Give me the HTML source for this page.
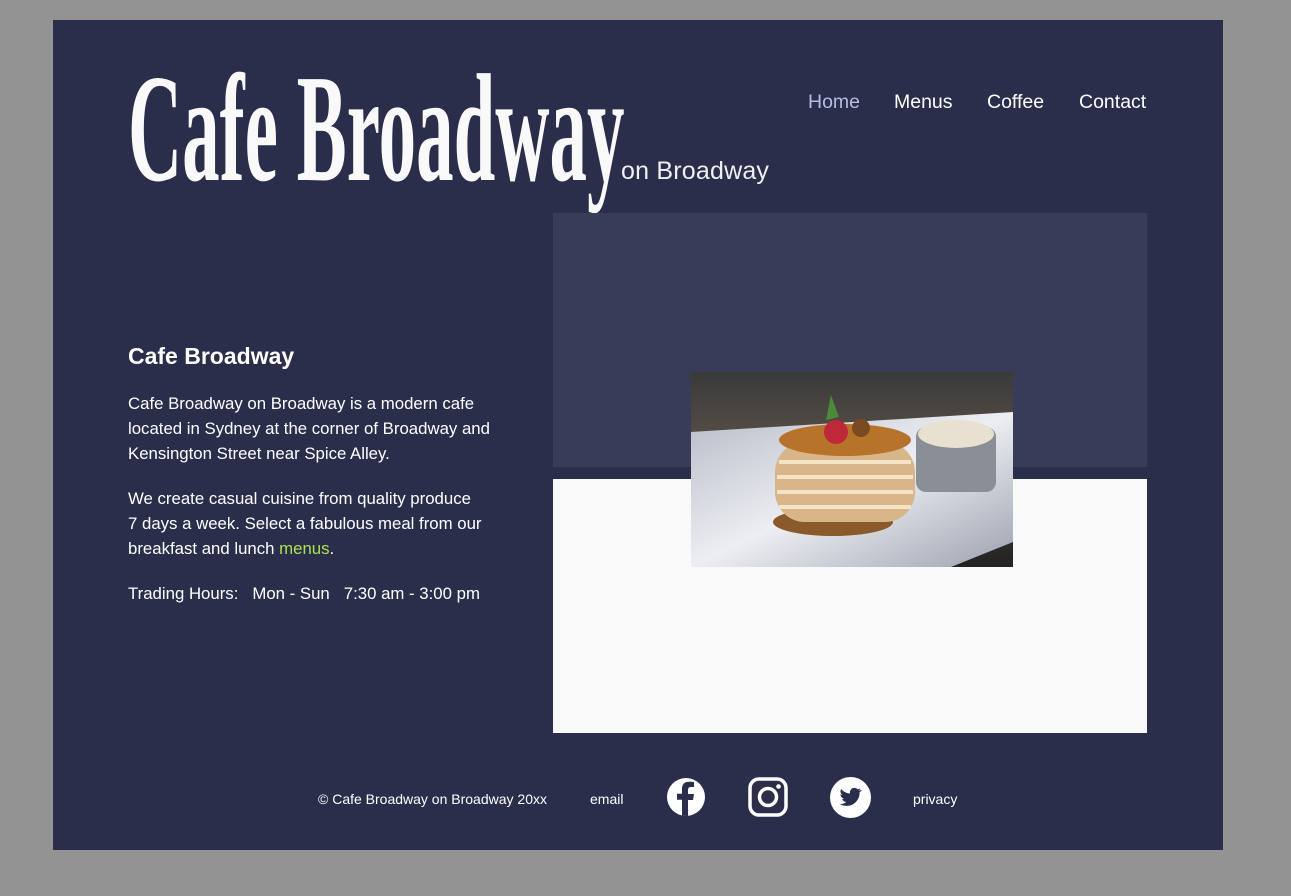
<!DOCTYPE html>
<html><head><style>
body{margin:0;width:1291px;height:896px;background:#939393;font-family:"Liberation Sans",Arial,sans-serif;position:relative;overflow:hidden}
.p{position:absolute;left:53px;top:20px;width:1170px;height:830px;background:#2b2e4b}
.a{position:absolute;color:#fff}
.title{left:128px;top:52px;font-family:"Liberation Serif",serif;font-weight:bold;font-size:154px;line-height:1;transform:scaleX(0.487);transform-origin:0 0;white-space:nowrap;color:#f9f9f9}
.sub{left:621px;top:157px;font-size:25px;color:#f0f0f0;font-weight:300;letter-spacing:0.2px}
.nav{top:91px;font-size:19.5px}
.txt{left:128px;font-size:16.8px;line-height:25px;width:420px}
.foot{top:791px;font-size:14px}
</style></head><body>
<div class="p"></div>
<div class="a title">Cafe Broadway</div>
<div class="a sub">on Broadway</div>
<div class="a nav" style="left:808px;color:#b6bce6">Home</div>
<div class="a nav" style="left:894px">Menus</div>
<div class="a nav" style="left:987px">Coffee</div>
<div class="a nav" style="left:1079px">Contact</div>
<div style="position:absolute;left:553px;top:213px;width:594px;height:254px;background:#393c58"></div>
<div style="position:absolute;left:553px;top:479px;width:594px;height:254px;background:#f9f9fa"></div>
<svg style="position:absolute;left:691px;top:372px" width="322" height="195" viewBox="0 0 322 195">
<defs><linearGradient id="bg" x1="0" y1="0" x2="0" y2="1"><stop offset="0" stop-color="#3a3a3a"/><stop offset="0.4" stop-color="#5a5048"/><stop offset="1" stop-color="#222"/></linearGradient>
<linearGradient id="pl" x1="0" y1="0" x2="1" y2="1"><stop offset="0" stop-color="#b8bcc8"/><stop offset="0.5" stop-color="#eceef2"/><stop offset="1" stop-color="#9da2b0"/></linearGradient></defs>
<rect width="322" height="195" fill="url(#bg)"/>
<polygon points="0,60 322,40 322,170 260,195 0,195" fill="url(#pl)"/>
<rect x="225" y="55" width="80" height="65" rx="10" fill="#8a8e96"/>
<ellipse cx="265" cy="62" rx="38" ry="14" fill="#e8e0d0"/>
<ellipse cx="142" cy="150" rx="60" ry="14" fill="#8a5a2a"/>
<rect x="84" y="70" width="140" height="80" rx="30" fill="#d9b68a"/>
<g fill="none" stroke="#f4e4c6" stroke-width="4"><path d="M88 90h132M86 105h136M86 120h136M88 135h132"/></g>
<ellipse cx="154" cy="68" rx="66" ry="16" fill="#b8732a"/>
<circle cx="145" cy="60" r="12" fill="#c0283a"/><circle cx="170" cy="56" r="9" fill="#7a4a20"/>
<path d="M135 48l5-25 8 22z" fill="#4a8a3a"/>
</svg>
<div class="a txt" style="top:344px;font-size:23px;font-weight:bold">Cafe Broadway</div>
<div class="a txt" style="top:391px">Cafe Broadway on Broadway is a modern cafe<br>located in Sydney at the corner of Broadway and<br>Kensington Street near Spice Alley.</div>
<div class="a txt" style="top:486px">We create casual cuisine from quality produce<br>7 days a week. Select a fabulous meal from our<br>breakfast and lunch <span style="color:#a9e34b">menus</span>.</div>
<div class="a txt" style="top:581px;white-space:pre">Trading Hours:   Mon - Sun   7:30 am - 3:00 pm</div>
<div class="a foot" style="left:318px">© Cafe Broadway on Broadway 20xx</div>
<div class="a foot" style="left:590px">email</div>
<div class="a foot" style="left:913px">privacy</div>
<svg style="position:absolute;left:667px;top:778px" width="38" height="38" viewBox="0 0 38 38"><circle cx="19" cy="19" r="19" fill="#fff"/><path d="M21 38V22h5l1-6h-6v-4c0-2 1-3 3-3h3V4c-1 0-3-.3-5-.3-5 0-7 3-7 7v5h-5v6h5v16z" fill="#2b2e4b"/></svg>
<svg style="position:absolute;left:748px;top:777px" width="40" height="40" viewBox="0 0 40 40"><rect x="2" y="2" width="36" height="36" rx="9" fill="none" stroke="#fff" stroke-width="3.5"/><circle cx="20" cy="20" r="8.5" fill="none" stroke="#fff" stroke-width="3.5"/><circle cx="30.5" cy="9.5" r="2.3" fill="#fff"/></svg>
<svg style="position:absolute;left:830px;top:777px" width="41" height="41" viewBox="0 0 41 41"><circle cx="20.5" cy="20.5" r="20.5" fill="#fff"/><path d="M31 13c-.8.4-1.6.6-2.5.7.9-.5 1.6-1.4 1.9-2.4-.8.5-1.8.9-2.7 1-1.7-1.8-4.6-1.9-6.4-.2-1.2 1.1-1.700 2.8-1.3 4.4-3.5-.2-6.7-1.8-8.9-4.5-1.2 2-.6 4.6 1.4 5.9-.7 0-1.4-.2-2-.6 0 2.2 1.5 4 3.6 4.5-.7.2-1.4.2-2 .1.6 1.8 2.3 3.1 4.2 3.1-1.9 1.5-4.3 2.2-6.7 1.900 2.1 1.3 4.5 2 7 2 8.4 0 13-7 13-13v-.6c.9-.6 1.7-1.4 2.3-2.3z" fill="#2b2e4b"/></svg>
</body></html>
